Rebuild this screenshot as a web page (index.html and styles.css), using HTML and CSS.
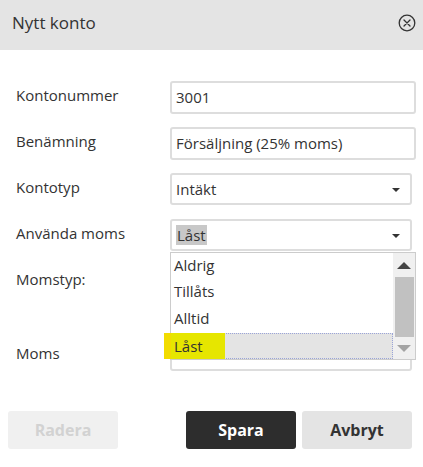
FILE: index.html
```html
<!DOCTYPE html>
<html lang="sv">
<head>
<meta charset="utf-8">
<title>Nytt konto</title>
<link rel="stylesheet" href="styles.css">
</head>
<body>
<div class="dialog">
  <div class="header">
    <span class="title">Nytt konto</span>
    <svg class="close" width="18" height="18" viewBox="0 0 18 18">
      <circle cx="9" cy="9" r="7.8" fill="none" stroke="#333" stroke-width="1.3"/>
      <path d="M6 6 L12 12 M12 6 L6 12" stroke="#333" stroke-width="1.3" stroke-linecap="round"/>
    </svg>
  </div>
  <div class="form">
    <div class="row">
      <label class="label">Kontonummer</label>
      <div class="field input">3001</div>
    </div>
    <div class="row">
      <label class="label">Benämning</label>
      <div class="field input">Försäljning (25% moms)</div>
    </div>
    <div class="row">
      <label class="label">Kontotyp</label>
      <div class="field select">Intäkt<span class="caret"></span></div>
    </div>
    <div class="row">
      <label class="label">Använda moms</label>
      <div class="field select open"><span class="sel-text">Låst</span><span class="caret"></span>
        <div class="dropdown">
          <div class="options">
            <div class="opt">Aldrig</div>
            <div class="opt">Tillåts</div>
            <div class="opt">Alltid</div>
            <div class="opt active">Låst<span class="marker"></span></div>
          </div>
          <div class="scrollbar">
            <div class="arrow up"></div>
            <div class="thumb"></div>
            <div class="arrow down"></div>
          </div>
        </div>
      </div>
    </div>
    <div class="row tall">
      <label class="label">Momstyp:</label>
      <div class="field blank"></div>
    </div>
    <div class="row">
      <label class="label">Moms</label>
      <div class="field input narrow"></div>
    </div>
  </div>
  <div class="buttons">
    <button class="btn disabled">Radera</button>
    <div class="right">
      <button class="btn primary">Spara</button>
      <button class="btn secondary">Avbryt</button>
    </div>
  </div>
</div>
</body>
</html>
```

FILE: styles.css
```css
* { box-sizing: border-box; }
html, body { margin: 0; padding: 0; background: #fff; }
body {
  font-family: "Open Sans", "Noto Sans", sans-serif;
  color: #333;
  width: 423px;
}
.header {
  height: 50px;
  background: #e4e4e4;
  display: flex;
  align-items: center;
  justify-content: space-between;
  padding: 0 7px 5px 12px;
}
.title { font-size: 17px; color: #333; }
.close { display: block; }
.form {
  padding: 31px 7px 0 16px;
  display: flex;
  flex-direction: column;
  gap: 13px;
}
.row {
  display: flex;
  align-items: flex-start;
  height: 33px;
}
.row.tall { height: 61px; }
.label {
  width: 154px;
  font-size: 15px;
  line-height: 20px;
  padding-top: 4px;
  color: #333;
  flex: none;
}
.field {
  position: relative;
  width: 246px;
  height: 33px;
  border: 2px solid #ddd;
  border-radius: 3px;
  font-size: 15px;
  line-height: 29px;
  padding-left: 4px;
  color: #333;
}
.field.select { width: 242px; height: 32px; }
.field.narrow { width: 242px; height: 32px; }
.field.blank { border: none; }
.caret {
  position: absolute;
  right: 10px;
  top: 13px;
  width: 0; height: 0;
  border-left: 4px solid transparent;
  border-right: 4px solid transparent;
  border-top: 4px solid #333;
}
.sel-text { background: #c8c8c8; padding: 0 1px; line-height: 20px; display: inline-block; }
.dropdown {
  position: absolute;
  left: -2px;
  top: 31px;
  width: 246px;
  height: 108px;
  background: #fff;
  border: 1px solid #ccc;
  display: flex;
  z-index: 5;
}
.options { flex: 1; display: flex; flex-direction: column; }
.opt {
  height: 26.5px;
  line-height: 25px;
  padding-left: 3px;
  font-size: 15px;
  color: #333;
  position: relative;
}
.opt.active {
  background: #e4e4e4;
  border: 1px dotted #9aa4d8;
  padding-left: 2px;
  line-height: 24px;
  margin-top: 1px;
  z-index: 0;
  isolation: isolate;
}
.marker {
  position: absolute;
  left: -8px;
  top: -1px;
  width: 61px;
  height: 26px;
  background: #e6e600;
  border-left: 7px solid #f2dc00;
  z-index: -1;
}
.scrollbar {
  width: 22px;
  background: #f0f0f0;
  display: flex;
  flex-direction: column;
  align-items: center;
}
.arrow { width: 0; height: 0; border-left: 7px solid transparent; border-right: 7px solid transparent; }
.arrow.up { border-bottom: 7px solid #444; margin-top: 9px; margin-bottom: 8px; }
.arrow.down { border-top: 7px solid #a3a3a3; margin-top: 8px; }
.thumb { width: 19px; height: 60px; background: #c1c1c1; }
.buttons {
  display: flex;
  justify-content: space-between;
  padding: 39px 11px 0 8px;
}
.right { display: flex; gap: 6px; }
.btn {
  width: 110px;
  height: 38px;
  border: none;
  border-radius: 3px;
  font-family: "Open Sans", "Noto Sans", sans-serif;
  font-size: 16px;
  font-weight: 700;
  padding: 0;
}
.btn.disabled { background: #f0f0f0; color: #d2d2d2; }
.btn.primary { background: #2d2d2d; color: #fff; }
.btn.secondary { background: #e4e4e4; color: #333; }
```
